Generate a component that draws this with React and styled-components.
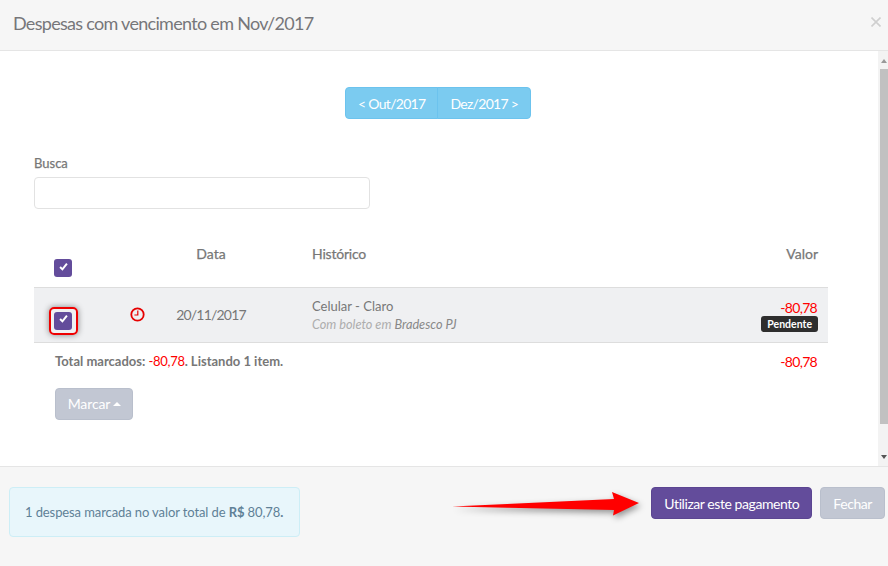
import React from 'react'
import styled, { createGlobalStyle } from 'styled-components'

const GlobalStyle = createGlobalStyle`
  html, body {
    margin: 0;
    padding: 0;
    background: #fff;
    font-family: Lato, "Open Sans", sans-serif;
    font-size: 13px;
    color: #777;
  }

  * {
    box-sizing: border-box;
  }
`

const Modal = styled.div`
  position: relative;
  width: 888px;
  height: 566px;
  display: flex;
  flex-direction: column;
  overflow: hidden;
`

const Header = styled.header`
  height: 51px;
  flex: none;
  display: flex;
  align-items: center;
  justify-content: space-between;
  padding: 0 7px 4px 13px;
  background: #f6f6f6;
  border-bottom: 1px solid #e5e5e5;
`

const Title = styled.h4`
  margin: 0;
  font-size: 18px;
  font-weight: 400;
  letter-spacing: -0.7px;
  color: #76767a;
`

const Close = styled.svg`
  width: 10px;
  height: 10px;
  margin-bottom: 2px;
  stroke: #cfcfcf;
  stroke-width: 1.6;
`

const Body = styled.div`
  flex: 1;
  display: flex;
  min-height: 0;
`

const Content = styled.div`
  flex: 1;
  padding: 36px 0 0 34px;
  display: flex;
  flex-direction: column;
  align-items: flex-start;
  background: #fff;
`

const Scrollbar = styled.div`
  width: 10px;
  flex: none;
  display: flex;
  flex-direction: column;
  align-items: flex-end;
  background: #f3f3f3;
  padding: 2px 0 1px;
`

const ScrollArrow = styled.div`
  width: 8px;
  height: 16px;
  display: flex;
  align-items: center;
  justify-content: center;
  ${(p) => p.$down && 'margin-top: auto;'}

  &::after {
    content: '';
    border-left: 3.5px solid transparent;
    border-right: 3.5px solid transparent;
    border-${(p) => (p.$down ? 'top' : 'bottom')}: 4px solid ${(p) => (p.$down ? '#555' : '#999')};
  }
`

const ScrollThumb = styled.div`
  width: 8px;
  height: 355px;
  background: #c1c1c1;
`

const PagerGroup = styled.div`
  align-self: flex-start;
  margin-left: 311px;
  display: flex;
  height: 32px;
`

const PagerButton = styled.button`
  height: 32px;
  padding: 0 12px;
  font: 400 14px Lato, sans-serif;
  letter-spacing: -0.7px;
  color: #fff;
  background: #7bcbf0;
  border: 1px solid #6cc3ee;
  border-radius: ${(p) => (p.$first ? '4px 0 0 4px' : '0 4px 4px 0')};
  ${(p) => !p.$first && 'margin-left: -1px;'}
`

const Field = styled.div`
  margin-top: 36px;
  width: 336px;
`

const Label = styled.label`
  display: block;
  height: 16px;
  line-height: 16px;
  margin-bottom: 6px;
  font-size: 13px;
  font-weight: 400;
  -webkit-text-stroke: 0.25px #777;
  color: #777;
`

const SearchInput = styled.input`
  display: block;
  width: 100%;
  height: 32px;
  background: #fff;
  border: 1px solid #e2e2e2;
  border-radius: 4px;
`

const Table = styled.div`
  width: 794px;
  margin-top: 26px;
`

const Grid = styled.div`
  display: grid;
  grid-template-columns: 78px 50px 98px 1fr auto;
  padding-right: 11px;
`

const HeaderRow = styled(Grid)`
  height: 52px;
  font-size: 14px;
  font-weight: 400;
  -webkit-text-stroke: 0.25px #777;
  color: #777;
`

const HeaderCell = styled.div`
  padding-top: 11px;
  line-height: 16px;
  text-align: ${(p) => p.$align || 'left'};
  ${(p) => p.$indent && 'padding-left: 52px; letter-spacing: -0.2px;'}
  ${(p) => p.$align === 'right' && 'margin-right: -1px;'}
`

const CheckCell = styled.div`
  padding: ${(p) => (p.$head ? '24px' : '0')} 0 0 20px;
  position: relative;
  ${(p) => !p.$head && 'display: flex; align-items: center; padding-top: 11px;'}
`

const Checkbox = styled.span`
  display: flex;
  align-items: center;
  justify-content: center;
  width: 18px;
  height: 18px;
  background: #634c9b;
  border-radius: 3px;

  svg {
    width: 9px;
    height: 9px;
    margin-top: -4px;
  }
`

const Highlight = styled.span`
  position: absolute;
  left: 15px;
  top: 50%;
  margin-top: -8px;
  width: 29px;
  height: 28px;
  border: 2px solid #ee0000;
  border-radius: 5px;
  box-shadow: 0 0 6px rgba(0, 0, 0, 0.45);
`

const DataRow = styled(Grid)`
  height: 56px;
  align-items: center;
  background: #eff0f2;
  border-top: 1px solid #dddddd;
  border-bottom: 1px solid #dddddd;
`

const IconCell = styled.div`
  display: flex;
  justify-content: center;
  margin-top: -2px;
`

const DateCell = styled.div`
  font-size: 14px;
  letter-spacing: -0.8px;
  text-align: center;
  margin-top: -1px;
`

const History = styled.div`
  padding-left: 52px;
  line-height: 18px;
`

const HistoryName = styled.div`
  font-size: 13px;
  color: #777;
`

const HistoryNote = styled.div`
  font-size: 12.7px;
  font-style: italic;
  color: #adadad;

  span {
    color: #888;
  }
`

const ValueCell = styled.div`
  display: flex;
  flex-direction: column;
  align-items: flex-end;
`

const Negative = styled.span`
  color: #ff0000;
  font-size: ${(p) => p.$size || '14px'};
  letter-spacing: ${(p) => p.$tight || '-0.7px'};
  font-weight: 400;
  line-height: 17px;
`

const Badge = styled.span`
  height: 16px;
  line-height: 16px;
  margin-right: -1px;
  padding: 0 6px;
  background: #2e2e2e;
  border-radius: 3px;
  color: #fff;
  font-size: 10.5px;
  font-weight: 700;
`

const TotalRow = styled.div`
  display: flex;
  justify-content: space-between;
  align-items: center;
  height: 36px;
  padding: 0 11px 0 21px;
  font-size: 13px;
  font-weight: 700;
  color: #777;
`

const DropButton = styled.button`
  margin: 9px 0 0 21px;
  width: 78px;
  height: 32px;
  display: flex;
  align-items: center;
  justify-content: center;
  gap: 3px;
  padding: 0 0 1px 1px;
  font: 400 14px Lato, sans-serif;
  letter-spacing: -0.1px;
  color: #fff;
  background: #c2c7d3;
  border: 1px solid #b9bfcc;
  border-radius: 4px;

  &::after {
    content: '';
    margin-top: 1px;
    border-left: 4px solid transparent;
    border-right: 4px solid transparent;
    border-bottom: 4px solid #fff;
  }
`

const Footer = styled.footer`
  height: 100px;
  flex: none;
  display: flex;
  justify-content: space-between;
  align-items: flex-start;
  padding: 20px 3px 0 9px;
  background: #f6f6f6;
  border-top: 1px solid #e5e5e5;
`

const Notice = styled.div`
  width: 291px;
  height: 50px;
  display: flex;
  align-items: center;
  white-space: pre;
  padding-left: 15px;
  font-size: 13px;
  letter-spacing: -0.1px;
  color: #5f8197;
  background: #e8f6fb;
  border: 1px solid #cdeef6;
  border-radius: 4px;

  b {
    font-weight: 700;
  }
`

const Actions = styled.div`
  display: flex;
  gap: 8px;
`

const FooterButton = styled.button`
  height: 32px;
  padding: 0 12px;
  font: 400 14px Lato, sans-serif;
  letter-spacing: -0.43px;
  color: #fff;
  background: ${(p) => (p.$primary ? '#634c9b' : '#c2c7d3')};
  border: 1px solid ${(p) => (p.$primary ? '#5b4591' : '#b9bfcc')};
  border-radius: 4px;
`

const Arrow = styled.svg`
  position: absolute;
  left: 448px;
  top: 485px;
  width: 200px;
  height: 40px;
  overflow: visible;
  filter: drop-shadow(2px 3px 3px rgba(0, 0, 0, 0.4));
`

const CheckMark = () => (
  <svg viewBox="0 0 10 10">
    <path d="M1.2 5.6 L3.8 8.2 L8.8 1.8" fill="none" stroke="#fff" strokeWidth="2.2" />
  </svg>
)

const Clock = () => (
  <svg width="15" height="15" viewBox="0 0 15 15" fill="none" stroke="#e60000" strokeWidth="1.8">
    <circle cx="7.5" cy="7.5" r="6.2" />
    <path d="M7.8 3.6 V8 H4.4" strokeWidth="1.2" />
  </svg>
)

const App = () => (
  <>
    <GlobalStyle />
    <Modal>
      <Header>
        <Title>Despesas com vencimento em Nov/2017</Title>
        <Close viewBox="0 0 10 10">
          <path d="M0.5 0.5 L9.5 9.5 M9.5 0.5 L0.5 9.5" />
        </Close>
      </Header>

      <Body>
        <Content>
          <PagerGroup>
            <PagerButton $first>&lt; Out/2017</PagerButton>
            <PagerButton>Dez/2017 &gt;</PagerButton>
          </PagerGroup>

          <Field>
            <Label>Busca</Label>
            <SearchInput />
          </Field>

          <Table>
            <HeaderRow>
              <CheckCell $head>
                <Checkbox><CheckMark /></Checkbox>
              </CheckCell>
              <div />
              <HeaderCell $align="center">Data</HeaderCell>
              <HeaderCell $indent>Histórico</HeaderCell>
              <HeaderCell $align="right">Valor</HeaderCell>
            </HeaderRow>

            <DataRow>
              <CheckCell>
                <Checkbox><CheckMark /></Checkbox>
                <Highlight />
              </CheckCell>
              <IconCell><Clock /></IconCell>
              <DateCell>20/11/2017</DateCell>
              <History>
                <HistoryName>Celular - Claro</HistoryName>
                <HistoryNote>Com boleto em <span>Bradesco PJ</span></HistoryNote>
              </History>
              <ValueCell>
                <Negative>-80,78</Negative>
                <Badge>Pendente</Badge>
              </ValueCell>
            </DataRow>

            <TotalRow>
              <span>Total marcados: <Negative $size="13px" $tight="-0.3px">-80,78</Negative>. Listando 1 item.</span>
              <Negative>-80,78</Negative>
            </TotalRow>
          </Table>

          <DropButton>Marcar</DropButton>
        </Content>

        <Scrollbar>
          <ScrollArrow />
          <ScrollThumb />
          <ScrollArrow $down />
        </Scrollbar>
      </Body>

      <Footer>
        <Notice>
          1 despesa marcada no valor total de <b>R$ </b>80,78<b>.</b>
        </Notice>
        <Actions>
          <FooterButton $primary>Utilizar este pagamento</FooterButton>
          <FooterButton>Fechar</FooterButton>
        </Actions>
      </Footer>

      <Arrow viewBox="0 0 200 40">
        <path d="M4 21.5 L166 14 L164 7 L191 18 L165 30.5 L166 25 Z" fill="#ff0000" />
      </Arrow>
    </Modal>
  </>
)

export default App
